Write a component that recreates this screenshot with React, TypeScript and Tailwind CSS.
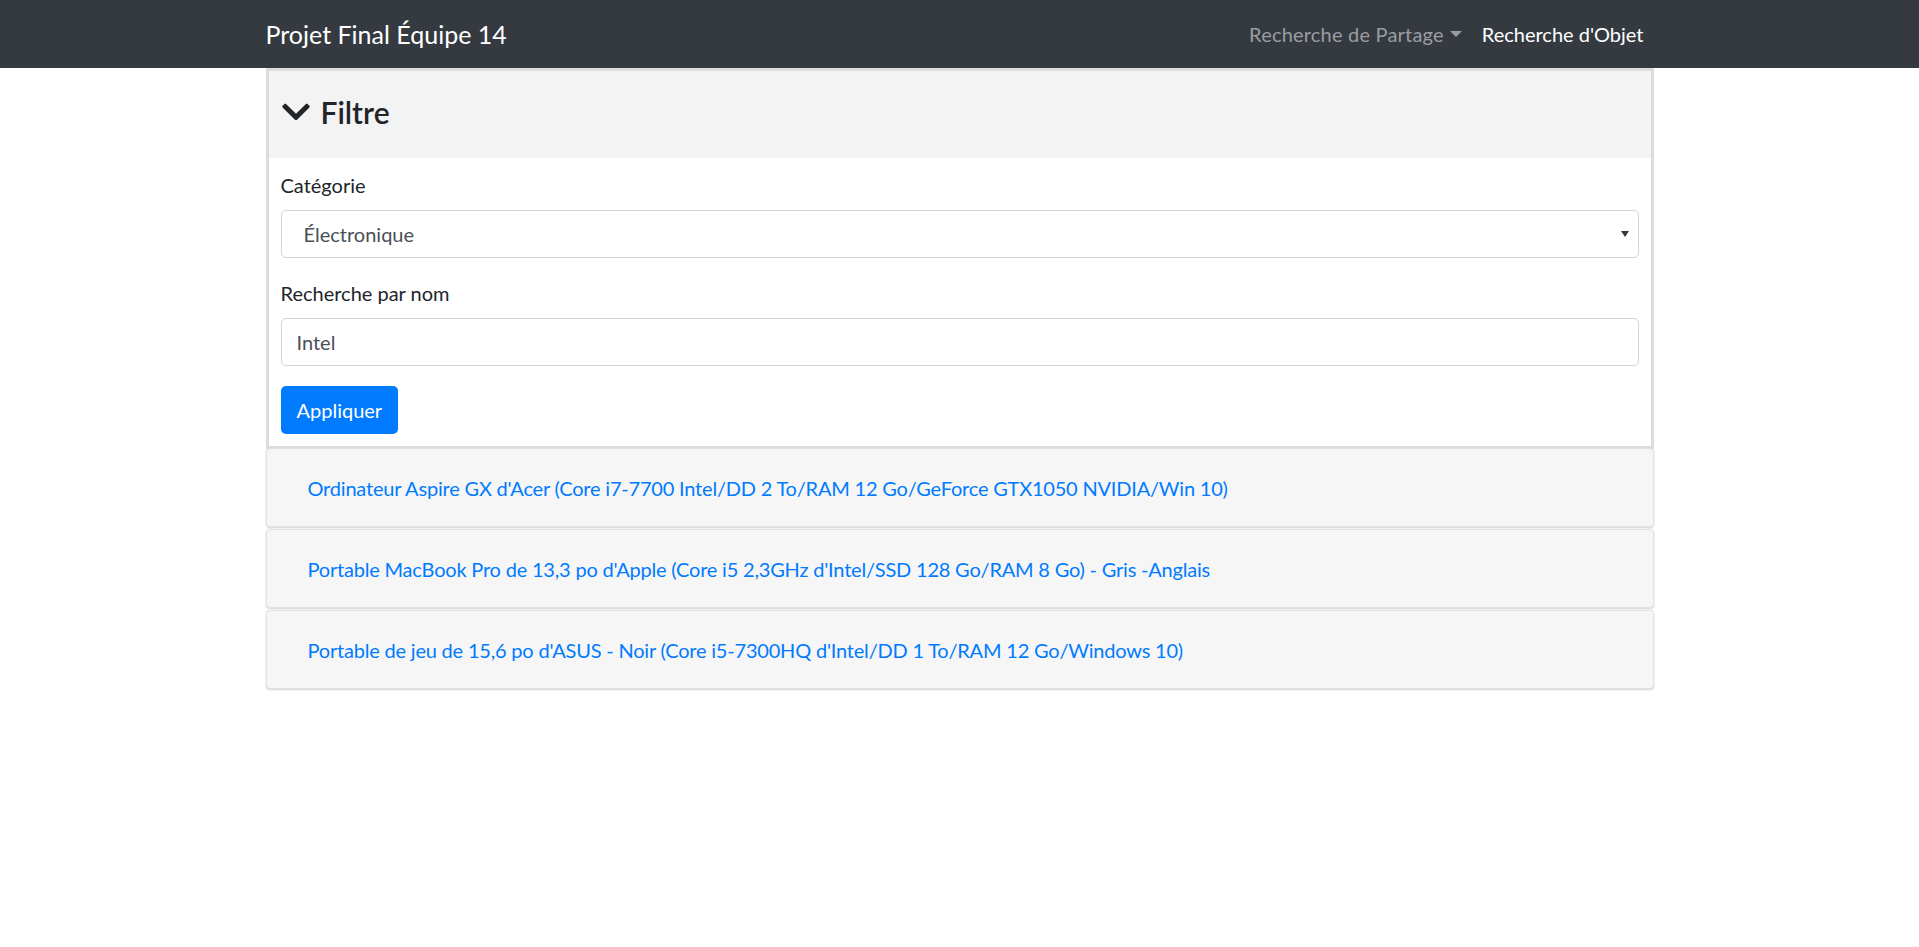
import React from "react";

const items = [
    "Ordinateur Aspire GX d'Acer (Core i7-7700 Intel/DD 2 To/RAM 12 Go/GeForce GTX1050 NVIDIA/Win 10)",
    "Portable MacBook Pro de 13,3 po d'Apple (Core i5 2,3GHz d'Intel/SSD 128 Go/RAM 8 Go) - Gris -Anglais",
    "Portable de jeu de 15,6 po d'ASUS - Noir (Core i5-7300HQ d'Intel/DD 1 To/RAM 12 Go/Windows 10)",
];

const ChevronDown = () => (
    <svg width="28" height="32" viewBox="0 0 448 512" fill="#212529">
        <path d="M207.029 381.476L12.686 187.132c-9.373-9.373-9.373-24.569 0-33.941l22.667-22.667c9.357-9.357 24.522-9.375 33.901-.04L224 284.505l154.745-154.021c9.379-9.335 24.544-9.317 33.901.04l22.667 22.667c9.373 9.373 9.373 24.569 0 33.941L240.971 381.476c-9.373 9.372-24.569 9.372-33.942 0z" />
    </svg>
);

const App: React.FC = () => {
    return (
        <div className="min-h-[947px] bg-white font-['Lato','Noto_Sans',sans-serif] text-[20px] leading-[30px] text-[#212529]">
            {/* navbar */}
            <nav className="h-[68px] bg-[#343a40]">
                <div className="w-[1388px] mx-auto h-full flex items-center justify-between">
                    <span className="text-[25px] text-white">Projet Final Équipe 14</span>
                    <div className="flex items-center">
                        <span className="px-[10px] flex items-center text-[#9a9da0] tracking-[0.2px]">
                            Recherche de Partage
                            <span className="ml-[6px] w-0 h-0 border-t-[6px] border-t-[#9a9da0] border-x-[6px] border-x-transparent" />
                        </span>
                        <span className="px-[10px] text-white">Recherche d'Objet</span>
                    </div>
                </div>
            </nav>

            <div className="w-[1388px] mx-auto">
                {/* filter card */}
                <div className="border-[3px] border-[#dcdcdc]">
                    <div className="h-[87px] bg-[#f3f3f3] px-[13px] pb-[6px] flex items-center gap-[11px]">
                        <ChevronDown />
                        <h4 className="text-[30px] font-semibold leading-[36px]">Filtre</h4>
                    </div>
                    <div className="px-[12px] pt-[12px] pb-[12px] bg-white">
                        <div className="mb-[20px]">
                            <label className="block mb-[10px]">Catégorie</label>
                            <div className="h-[48px] border border-[#ced4da] rounded-[5px] flex items-center justify-between pl-[22px] pr-[9px] text-[#495057]">
                                <span>Électronique</span>
                                <span className="w-0 h-0 border-t-[6px] border-t-[#343a40] border-x-[4px] border-x-transparent" />
                            </div>
                        </div>
                        <div className="mb-[20px]">
                            <label className="block mb-[10px]">Recherche par nom</label>
                            <input
                                type="text"
                                defaultValue="Intel"
                                className="w-full h-[48px] border border-[#ced4da] rounded-[5px] px-[15px] text-[#495057] outline-none"
                            />
                        </div>
                        <button
                            type="button"
                            className="h-[48px] px-[16px] bg-[#007bff] text-white rounded-[5px]"
                        >
                            Appliquer
                        </button>
                    </div>
                </div>

                {/* results */}
                <div className="flex flex-col gap-[2px] mt-[-1px]">
                    {items.map((name) => (
                        <div
                            key={name}
                            className="h-[79px] bg-[#f6f6f6] border border-[#e2e2e2] rounded-[4px] shadow-[0_1px_2px_rgba(0,0,0,0.18)] flex items-center pl-[41px]"
                        >
                            <a className="text-[#007bff] tracking-[-0.2px]">{name}</a>
                        </div>
                    ))}
                </div>
            </div>
        </div>
    );
};

export default App;
